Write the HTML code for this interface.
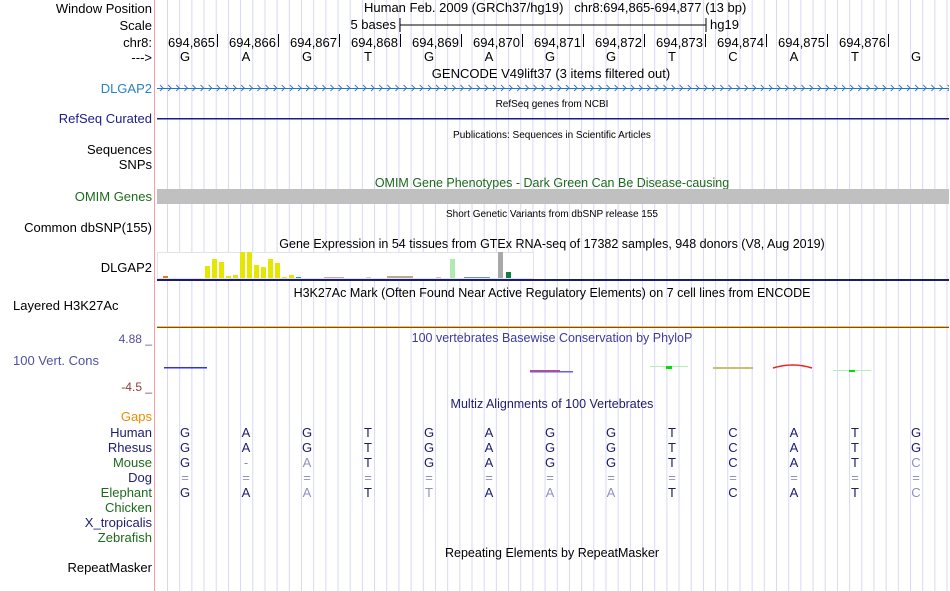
<!DOCTYPE html><html><head><style>
body{margin:0;background:#fff;width:950px;height:591px;overflow:hidden}
svg{display:block;font-family:"Liberation Sans",sans-serif}
</style></head><body>
<svg width="950" height="591" xmlns="http://www.w3.org/2000/svg">
<defs>
<pattern id="g" x="167" y="0" width="12.18" height="591" patternUnits="userSpaceOnUse"><rect x="0" y="0" width="1" height="591" fill="#d8d8f4"/></pattern>
<pattern id="ar" x="158" y="84" width="8.12" height="8" patternUnits="userSpaceOnUse"><path d="M2,1 L5,4 L2,7" stroke="#2a74b8" fill="none" stroke-width="0.9"/></pattern>
</defs>
<rect x="156" y="0" width="794" height="591" fill="url(#g)"/>
<rect x="154" y="0" width="1" height="591" fill="#f4a0a0"/>
<g font-size="13" text-anchor="end" fill="#000">
<text x="152" y="13">Window Position</text>
<text x="152" y="30">Scale</text>
<text x="152" y="47">chr8:</text>
<text x="152" y="62">---&gt;</text>
<text x="152" y="93" fill="#2a82c0">DLGAP2</text>
<text x="152" y="123" fill="#1c1c8c">RefSeq Curated</text>
<text x="152" y="154">Sequences</text>
<text x="152" y="169">SNPs</text>
<text x="152" y="201" fill="#1c6a1c">OMIM Genes</text>
<text x="152" y="232">Common dbSNP(155)</text>
<text x="152" y="272">DLGAP2</text>
<text x="13" y="310" text-anchor="start">Layered H3K27Ac</text>
<text x="152" y="343" font-size="12" fill="#5050a0">4.88 _</text>
<text x="13" y="365" text-anchor="start" fill="#5050a0">100 Vert. Cons</text>
<text x="152" y="391" font-size="12" fill="#8c3c3c">-4.5 _</text>
<text x="152" y="421" fill="#f08c00">Gaps</text>
<text x="152" y="437" fill="#1c1c6c">Human</text>
<text x="152" y="452" fill="#1c1c6c">Rhesus</text>
<text x="152" y="467" fill="#1c6a1c">Mouse</text>
<text x="152" y="482" fill="#1c1c6c">Dog</text>
<text x="152" y="497" fill="#1c6a1c">Elephant</text>
<text x="152" y="512" fill="#1c6a1c">Chicken</text>
<text x="152" y="527" fill="#1c1c6c">X_tropicalis</text>
<text x="152" y="542" fill="#1c6a1c">Zebrafish</text>
<text x="152" y="572">RepeatMasker</text>
</g>
<g font-size="13" fill="#000">
<text x="364" y="12">Human Feb. 2009 (GRCh37/hg19)&#160;&#160;&#160;chr8:694,865-694,877 (13 bp)</text>
<text x="396" y="29" text-anchor="end">5 bases</text>
<text x="710" y="29">hg19</text>
</g>
<path d="M400,18V32M400,25H706M706,18V32" stroke="#000" fill="none"/>
<g font-size="13" text-anchor="end">
<text x="215" y="47">694,865</text><text x="276" y="47">694,866</text><text x="337" y="47">694,867</text><text x="398" y="47">694,868</text><text x="459" y="47">694,869</text><text x="520" y="47">694,870</text><text x="581" y="47">694,871</text><text x="642" y="47">694,872</text><text x="703" y="47">694,873</text><text x="764" y="47">694,874</text><text x="825" y="47">694,875</text><text x="886" y="47">694,876</text>
</g>
<path d="M217.5,34V47M278.5,34V47M339.5,34V47M400.5,34V47M461.5,34V47M522.5,34V47M583.5,34V47M644.5,34V47M705.5,34V47M766.5,34V47M827.5,34V47M888.5,34V47" stroke="#000"/>
<g font-size="13" text-anchor="middle">
<text x="185" y="61">G</text><text x="246" y="61">A</text><text x="307" y="61">G</text><text x="368" y="61">T</text><text x="429" y="61">G</text><text x="489" y="61">A</text><text x="550" y="61">G</text><text x="611" y="61">G</text><text x="672" y="61">T</text><text x="733" y="61">C</text><text x="794" y="61">A</text><text x="855" y="61">T</text><text x="916" y="61">G</text>
<text x="551" y="78">GENCODE V49lift37 (3 items filtered out)</text>
<text x="552" y="107" font-size="10">RefSeq genes from NCBI</text>
<text x="552" y="138" font-size="10">Publications: Sequences in Scientific Articles</text>
<text x="552" y="187" fill="#1c6a1c" font-size="12.5">OMIM Gene Phenotypes - Dark Green Can Be Disease-causing</text>
<text x="552" y="217" font-size="10">Short Genetic Variants from dbSNP release 155</text>
<text x="552" y="248" font-size="12.5">Gene Expression in 54 tissues from GTEx RNA-seq of 17382 samples, 948 donors (V8, Aug 2019)</text>
<text x="552" y="297" font-size="12.5">H3K27Ac Mark (Often Found Near Active Regulatory Elements) on 7 cell lines from ENCODE</text>
<text x="552" y="342" font-size="12.5" fill="#3c3c9c">100 vertebrates Basewise Conservation by PhyloP</text>
<text x="552" y="408" font-size="12.5" fill="#1c1c6c">Multiz Alignments of 100 Vertebrates</text>
<text x="552" y="557" font-size="12.5">Repeating Elements by RepeatMasker</text>
</g>
<rect x="157" y="88" width="792" height="1" fill="#2a74b8"/>
<rect x="157" y="84" width="792" height="8" fill="url(#ar)"/>
<rect x="157" y="118" width="792" height="1.5" fill="#1c1c8c"/>
<rect x="157" y="189" width="792" height="15" fill="#c0c0c0"/>
<rect x="157.5" y="252.5" width="376" height="26" fill="#fff" stroke="#e4e4e4"/>
<g>
<rect x="163" y="276" width="5" height="2" fill="#e08020"/>
<rect x="205" y="266" width="5" height="12" fill="#e6e600"/>
<rect x="212" y="259" width="5" height="19" fill="#e6e600"/>
<rect x="219" y="262" width="5" height="16" fill="#e6e600"/>
<rect x="226" y="276" width="5" height="2" fill="#e6e600"/>
<rect x="233" y="275" width="5" height="3" fill="#e6e600"/>
<rect x="240" y="252" width="5" height="26" fill="#e6e600"/>
<rect x="247" y="252" width="5" height="26" fill="#e6e600"/>
<rect x="254" y="265" width="5" height="13" fill="#e6e600"/>
<rect x="261" y="267" width="5" height="11" fill="#e6e600"/>
<rect x="268" y="259" width="5" height="19" fill="#e6e600"/>
<rect x="275" y="263" width="5" height="15" fill="#e6e600"/>
<rect x="282" y="277" width="5" height="1" fill="#e6e600"/>
<rect x="289" y="275" width="5" height="3" fill="#e6e600"/>
<rect x="296" y="277" width="5" height="1" fill="#20a0c0"/>
<rect x="324" y="277" width="20" height="1" fill="#c8a8a8"/>
<rect x="366" y="277" width="5" height="1" fill="#e8c0c8"/>
<rect x="387" y="276" width="26" height="2" fill="#b8a898"/>
<rect x="436" y="277" width="5" height="1" fill="#f0b0c0"/>
<rect x="450" y="259" width="5" height="19" fill="#b0eab0"/>
<rect x="464" y="277" width="26" height="1" fill="#7090c0"/>
<rect x="498" y="252" width="5" height="26" fill="#a8a8a8"/>
<rect x="506" y="272" width="5" height="6" fill="#108040"/>
</g>
<rect x="157" y="279" width="792" height="2" fill="#1c1c6c"/>
<rect x="157" y="326" width="792" height="1" fill="#f0c060"/>
<rect x="157" y="327" width="792" height="1" fill="#8c4c00"/>
<rect x="164" y="367" width="43" height="1.5" fill="#3030f0"/>
<rect x="530" y="371" width="43" height="1.5" fill="#6060f0"/>
<rect x="530" y="370" width="30" height="1" fill="#f04040"/>
<rect x="650" y="366" width="38" height="1" fill="#b0f0b0"/><rect x="666" y="366" width="6" height="3" fill="#00e000"/>
<rect x="713" y="367" width="40" height="2" fill="#c8c070"/>
<path d="M773,368 Q793,362 812,368" stroke="#f02020" fill="none" stroke-width="1.5"/>
<rect x="833" y="370" width="38" height="1" fill="#b0f0b0"/><rect x="849" y="370" width="6" height="2" fill="#00e000"/>
<g font-size="13" text-anchor="middle" fill="#1c1c6c">
<text x="185" y="437">G</text><text x="246" y="437">A</text><text x="307" y="437">G</text><text x="368" y="437">T</text><text x="429" y="437">G</text><text x="489" y="437">A</text><text x="550" y="437">G</text><text x="611" y="437">G</text><text x="672" y="437">T</text><text x="733" y="437">C</text><text x="794" y="437">A</text><text x="855" y="437">T</text><text x="916" y="437">G</text>
<text x="185" y="452">G</text><text x="246" y="452">A</text><text x="307" y="452">G</text><text x="368" y="452">T</text><text x="429" y="452">G</text><text x="489" y="452">A</text><text x="550" y="452">G</text><text x="611" y="452">G</text><text x="672" y="452">T</text><text x="733" y="452">C</text><text x="794" y="452">A</text><text x="855" y="452">T</text><text x="916" y="452">G</text>
<text x="185" y="467">G</text><text x="246" y="467" fill="#8888b8">-</text><text x="307" y="467" fill="#9090c0">A</text><text x="368" y="467">T</text><text x="429" y="467">G</text><text x="489" y="467">A</text><text x="550" y="467">G</text><text x="611" y="467">G</text><text x="672" y="467">T</text><text x="733" y="467">C</text><text x="794" y="467">A</text><text x="855" y="467">T</text><text x="916" y="467" fill="#9090c0">C</text>
<g fill="#9090c0"><text x="185" y="482">=</text><text x="246" y="482">=</text><text x="307" y="482">=</text><text x="368" y="482">=</text><text x="429" y="482">=</text><text x="489" y="482">=</text><text x="550" y="482">=</text><text x="611" y="482">=</text><text x="672" y="482">=</text><text x="733" y="482">=</text><text x="794" y="482">=</text><text x="855" y="482">=</text><text x="916" y="482">=</text></g>
<text x="185" y="497">G</text><text x="246" y="497">A</text><text x="307" y="497" fill="#9090c0">A</text><text x="368" y="497">T</text><text x="429" y="497" fill="#9090c0">T</text><text x="489" y="497">A</text><text x="550" y="497" fill="#9090c0">A</text><text x="611" y="497" fill="#9090c0">A</text><text x="672" y="497">T</text><text x="733" y="497">C</text><text x="794" y="497">A</text><text x="855" y="497">T</text><text x="916" y="497" fill="#9090c0">C</text>
</g>
</svg>
</body></html>
